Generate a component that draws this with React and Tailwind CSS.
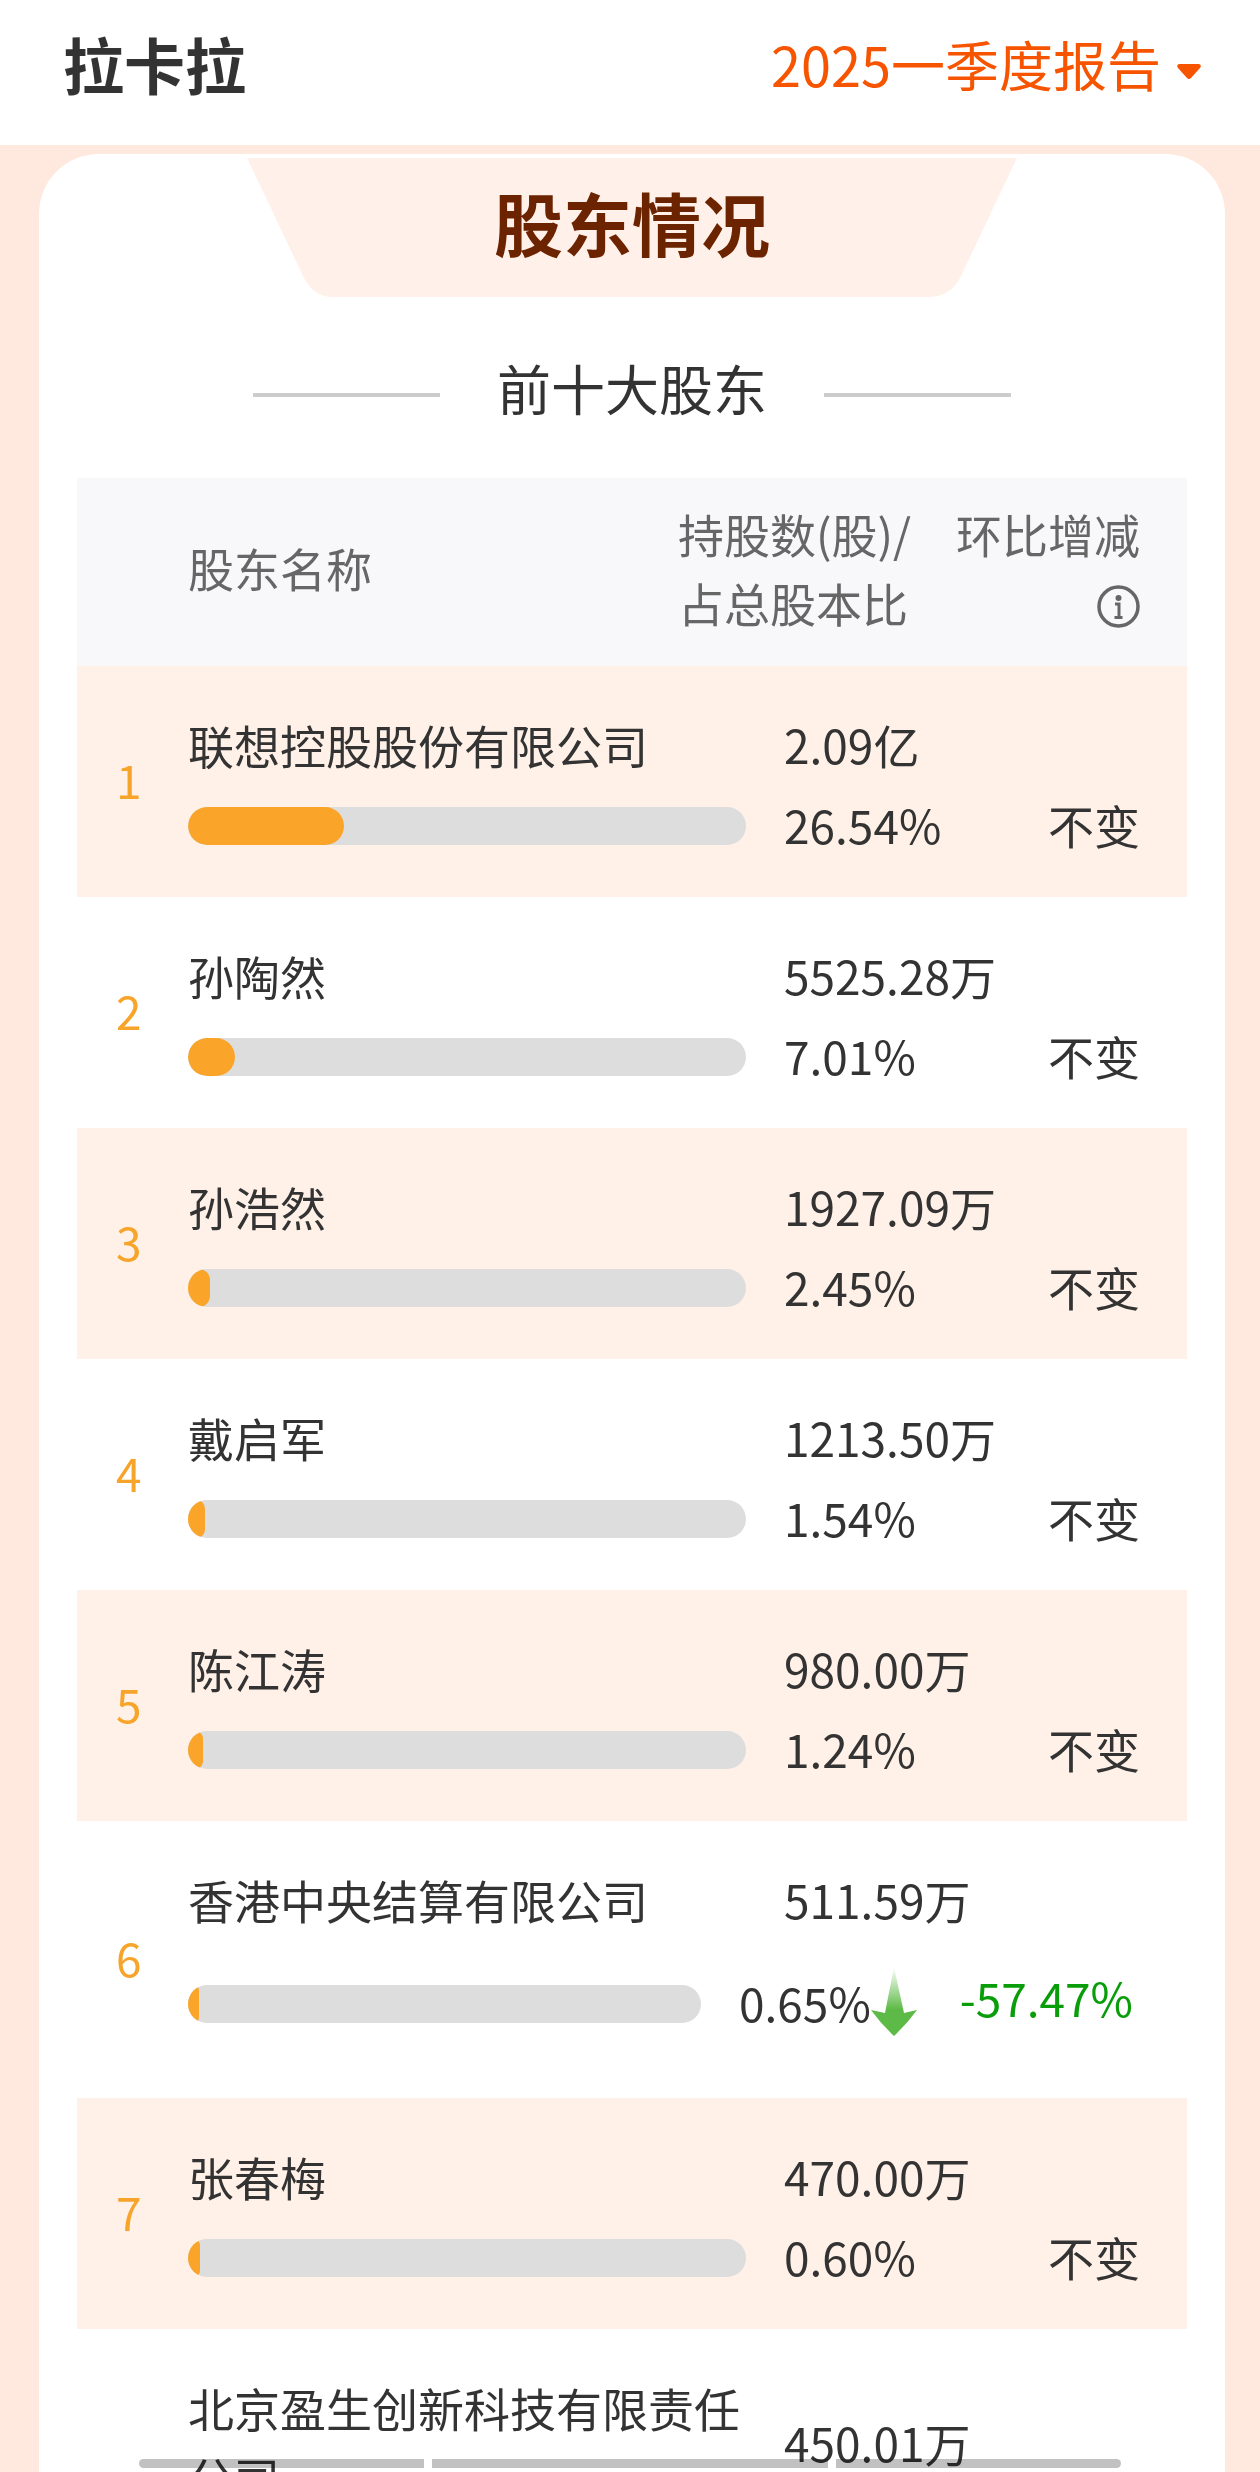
const holders = [
    { rank: 1, name: '联想控股股份有限公司', shares: '2.09亿', percent: 26.54 },
    { rank: 2, name: '孙陶然', shares: '5525.28万', percent: 7.01 },
    { rank: 3, name: '孙浩然', shares: '1927.09万', percent: 2.45 },
    { rank: 4, name: '戴启军', shares: '1213.50万', percent: 1.54 },
    { rank: 5, name: '陈江涛', shares: '980.00万', percent: 1.24 },
    { rank: 6, name: '香港中央结算有限公司', shares: '511.59万', percent: 0.65, change: '-57.47%' },
    { rank: 7, name: '张春梅', shares: '470.00万', percent: 0.6 },
    { name: '北京盈生创新科技有限责任公司', shares: '450.01万' },
];

function Header() {
    return (
        <header className="h-[145px] shrink-0 bg-white flex items-center justify-between pl-[63px] pr-[59px] pb-[18px]">
            <h1 className="text-[61px] leading-[80px] font-bold">拉卡拉</h1>
            <button className="flex items-center gap-4 text-[54px] leading-[80px] text-[#f75400]">
                2025一季度报告
                <svg className="w-6 h-4 mt-4" viewBox="0 0 24 16" fill="currentColor">
                    <path d="M2 0h20q3 1 1 4L14 14q-2 2-4 0L1 4Q-1 1 2 0Z" />
                </svg>
            </button>
        </header>
    );
}

function InfoIcon() {
    return (
        <svg className="w-[43px] h-[43px]" viewBox="0 0 43 43" fill="none" stroke="currentColor">
            <circle cx="21.5" cy="21.5" r="19.5" strokeWidth="3.5" />
            <circle cx="21.5" cy="13" r="3" fill="currentColor" stroke="none" />
            <path d="M18 19h4v13M17.5 32.5h8" strokeWidth="3" />
        </svg>
    );
}

function DownArrow() {
    return (
        <svg className="w-[46px] h-[70px]" viewBox="0 0 46 70">
            <defs>
                <linearGradient id="down-arrow" x1="0" y1="0" x2="0" y2="1">
                    <stop offset="0" stopColor="#5dba46" stopOpacity="0" />
                    <stop offset="0.62" stopColor="#5dba46" />
                </linearGradient>
            </defs>
            <path d="M23 0 33 46 46 43Q36 57 23 69 10 57 0 43L14 46Z" fill="url(#down-arrow)" />
        </svg>
    );
}

function SectionTitle() {
    return (
        <div className="relative mx-auto mt-1 w-[770px] h-[139px]">
            <svg className="absolute inset-0 w-full h-full" viewBox="0 0 770 139">
                <path d="M0 0H770L714 118Q704 139 681 139H86Q66 139 56 118Z" fill="#fff1e9" />
            </svg>
            <h2 className="relative pt-[14px] text-center text-[69px] leading-[100px] font-bold text-[#6b2300]">股东情况</h2>
        </div>
    );
}

function HolderRow({ rank, name, shares, percent, change }) {
    return (
        <tr className="grid grid-cols-[111px_1fr_170px_186px] pt-11 pb-[38px] pr-[47px] odd:bg-[#fff1e7]">
            <td className="row-span-2 self-center pl-[39px] -mt-[11px] text-[#f7a42b]">{rank}</td>
            <td className="pr-[38px]">{name}</td>
            <td className="col-span-2 self-center">{shares}</td>
            {percent !== undefined && (
                <td className={change ? 'flex items-center pr-[83px] mt-[14px] h-[112px]' : 'flex items-center pr-[38px] mt-[14px] h-[66px]'}>
                    <div className="w-full h-[38px] rounded-full bg-[#ddd] overflow-hidden">
                        <div className="h-full rounded-full bg-[#faa52a]" style={{ width: `${percent + 1.5}%` }} />
                    </div>
                </td>
            )}
            {percent !== undefined && (
                <td className={change ? 'flex items-center -ml-[45px] mt-[10px]' : 'flex items-center mt-[10px]'}>
                    {percent.toFixed(2)}%{change && <DownArrow />}
                </td>
            )}
            {percent !== undefined && (
                <td className={change ? 'self-center pr-[7px] text-right whitespace-nowrap text-[#0a9d0a]' : 'self-center mt-[10px] text-right'}>
                    {change || '不变'}
                </td>
            )}
        </tr>
    );
}

function HolderTable() {
    return (
        <table className="block mt-[39px] mx-[38px] text-[46px] leading-[69px]">
            <thead className="block">
                <tr className="grid grid-cols-[111px_1fr_278px_184px] items-center h-[188px] pr-[47px] pb-[9px] bg-[#f8f8fb] text-[#666] text-left">
                    <th></th>
                    <th className="font-normal">股东名称</th>
                    <th className="font-normal">
                        持股数(股)/
                        <br />
                        占总股本比
                    </th>
                    <th className="font-normal">
                        环比增减
                        <button className="flex items-center justify-end w-full h-[69px] pt-2" aria-label="环比增减说明">
                            <InfoIcon />
                        </button>
                    </th>
                </tr>
            </thead>
            <tbody className="block">
                {holders.map((holder) => (
                    <HolderRow key={holder.name} {...holder} />
                ))}
            </tbody>
        </table>
    );
}

export default function App() {
    return (
        <div
            className="relative flex flex-col h-screen overflow-hidden bg-[#ffe8dd] text-[#333]"
            style={{ fontFamily: '"Noto Sans CJK SC", sans-serif' }}
        >
            <Header />
            <main className="flex-1 mt-[9px] ml-[39px] mr-[35px] rounded-t-[60px] bg-white">
                <SectionTitle />
                <div className="flex items-center justify-center gap-[57px] mt-[54px]">
                    <span className="w-[187px] h-1 bg-[#ccc]" />
                    <h3 className="pb-[14px] text-[54px] leading-[74px]">前十大股东</h3>
                    <span className="w-[187px] h-1 bg-[#ccc]" />
                </div>
                <HolderTable />
            </main>
            <div className="absolute bottom-1 inset-x-[139px] flex gap-2 h-[9px] rounded-full overflow-hidden mix-blend-multiply">
                <span className="w-[285px] bg-[#c1c1c1]" />
                <span className="flex-1 bg-[#c1c1c1]" />
                <span className="w-[285px] bg-[#c1c1c1]" />
            </div>
        </div>
    );
}
